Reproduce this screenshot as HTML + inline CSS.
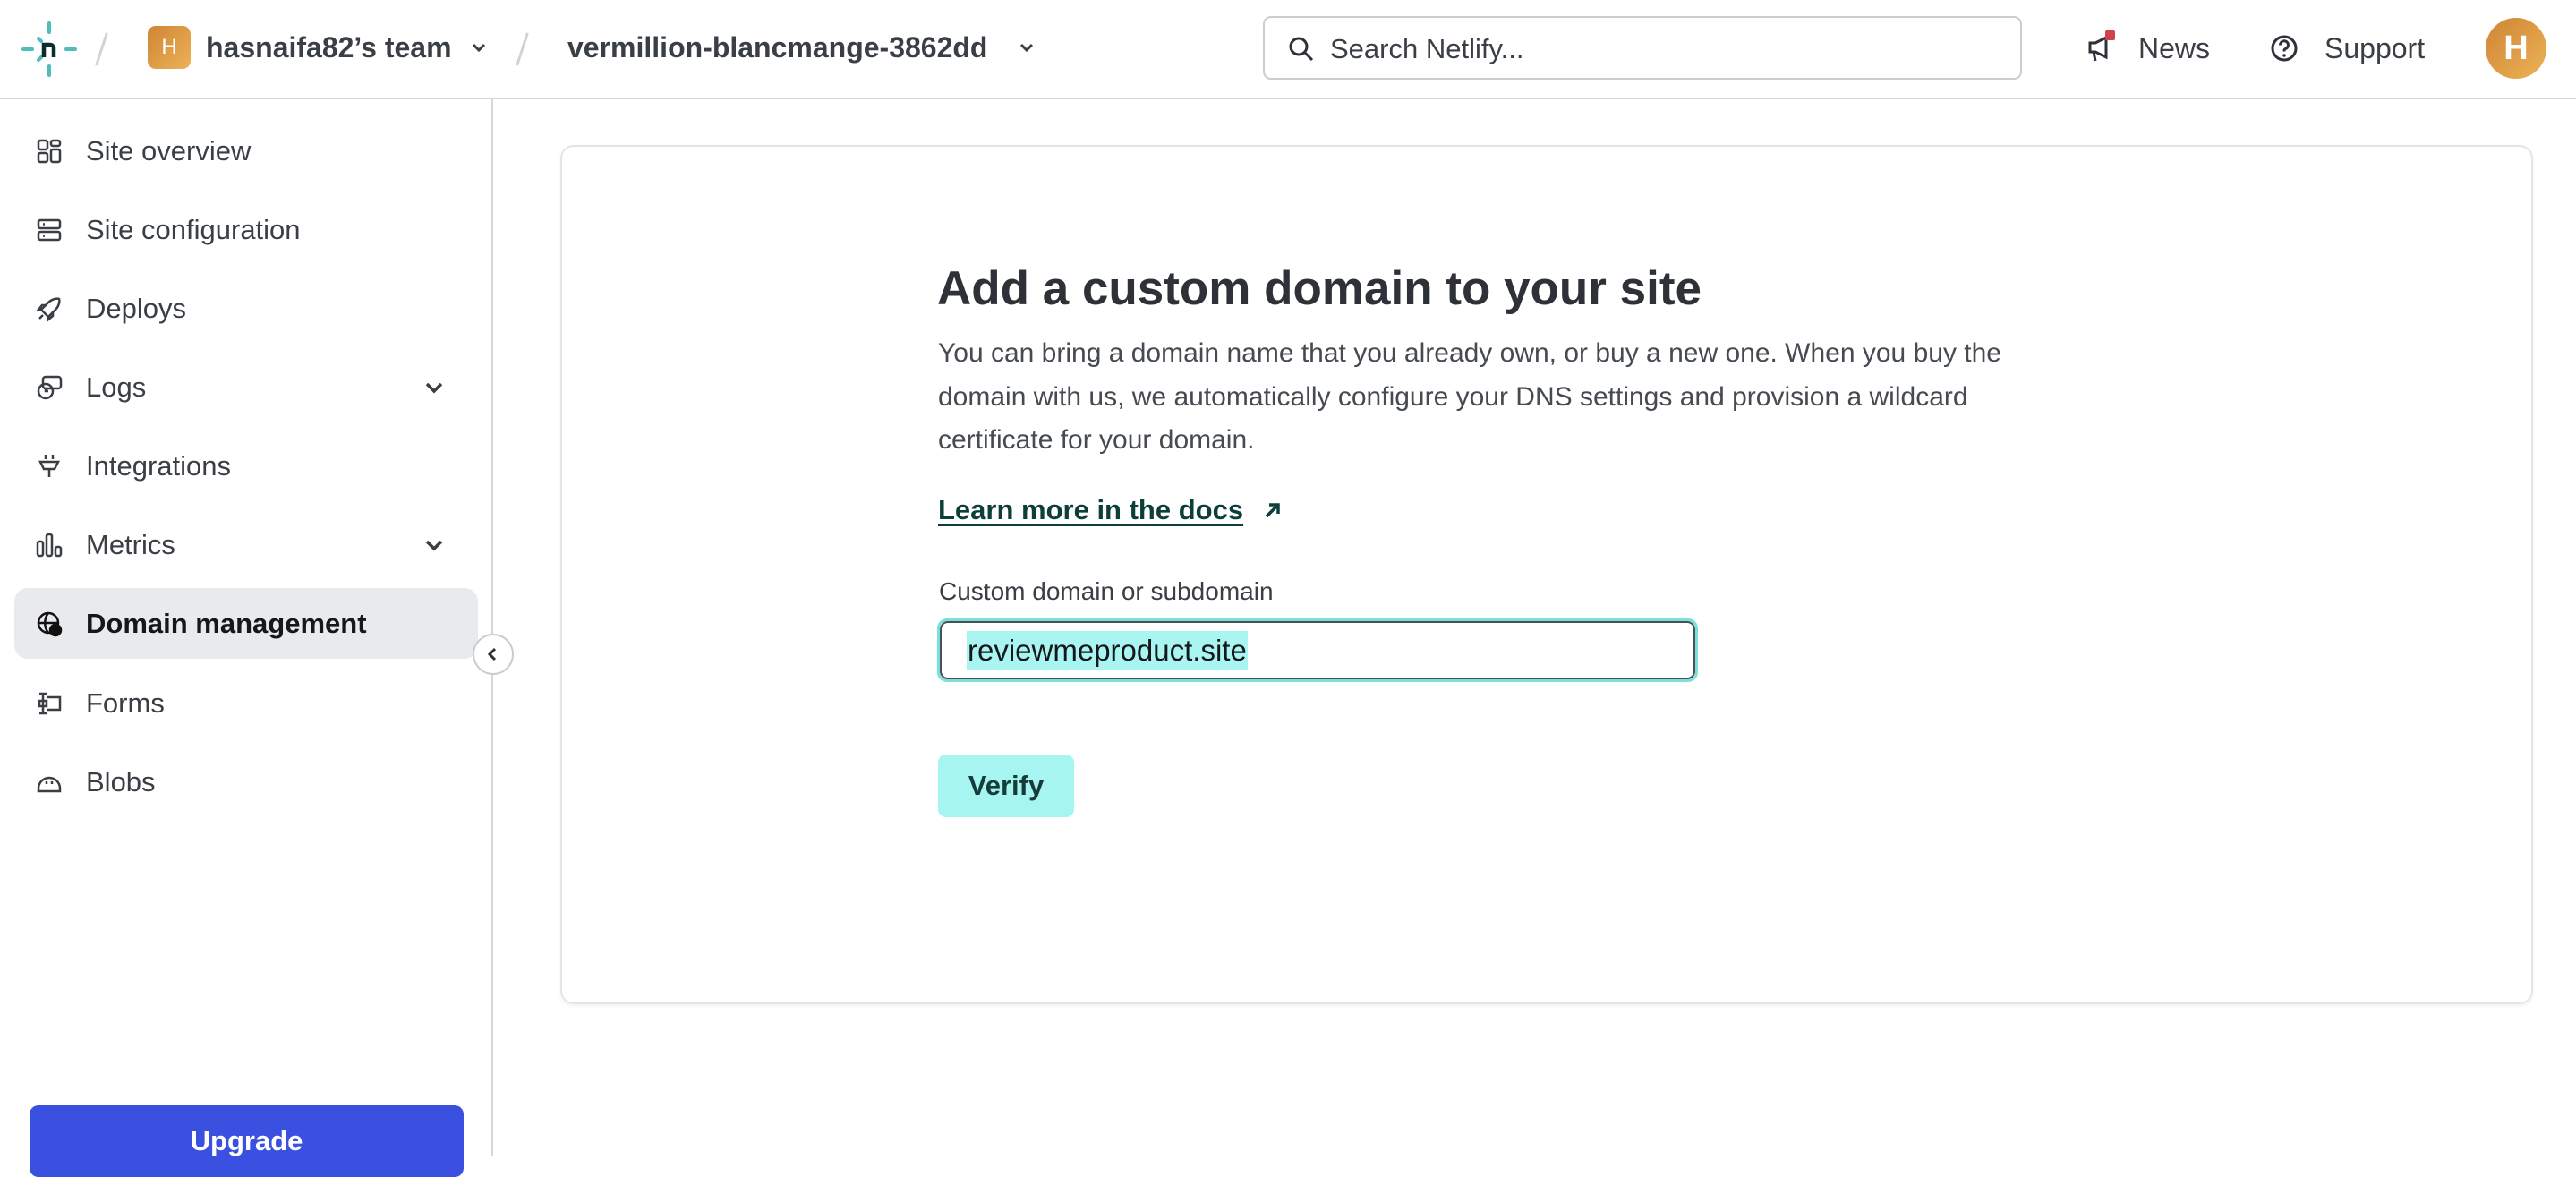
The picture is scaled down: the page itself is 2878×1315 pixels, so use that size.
<!DOCTYPE html>
<html><head><meta charset="utf-8"><style>
*{box-sizing:border-box;margin:0;padding:0}
body{width:2878px;height:1292px;overflow:hidden;background:#fff;font-family:"Liberation Sans",Arial,sans-serif;color:#2e3138;position:relative}
.hdr{position:absolute;left:0;top:0;width:2878px;height:111px;border-bottom:2px solid #d4d7dc;background:#fff}
.abs{position:absolute}
.t{font-size:32px;color:#3a3e45;white-space:nowrap}
.side{position:absolute;left:0;top:111px;width:551px;height:1181px;border-right:2px solid #d4d7dc}
.item{position:absolute;left:0;width:551px;height:80px;display:flex;align-items:center}
.item .ic{position:absolute;left:40px;width:30px;height:30px}
.item .lb{position:absolute;left:96px;font-size:31px;color:#3a3e45}
.item .ch{position:absolute;left:472px;width:26px;height:26px}
.card{position:absolute;left:626px;top:162px;width:2204px;height:960px;border:2px solid #e3e5e8;border-radius:15px;box-shadow:0 2px 4px rgba(0,0,0,.05)}
</style></head><body>
<div class="hdr">
 <svg class="abs" style="left:22px;top:22px" width="66" height="66" viewBox="0 0 66 66">
  <g stroke="#4fbdba" stroke-width="4" stroke-linecap="round"><line x1="33" y1="4" x2="33" y2="14"/><line x1="33" y1="52" x2="33" y2="62"/><line x1="4" y1="33" x2="14" y2="33"/><line x1="52" y1="33" x2="62" y2="33"/><line x1="21" y1="21" x2="24" y2="24"/><line x1="21" y1="45" x2="24" y2="42"/></g>
  <path d="M27 42V28h7a4 4 0 0 1 4 4v10" stroke="#0c2d2e" stroke-width="4.5" fill="none"/>
 </svg>
 <div class="abs" style="left:112px;top:36px;width:3px;height:38px;background:#d0d3d8;transform:rotate(18deg)"></div>
 <div class="abs" style="left:165px;top:29px;width:48px;height:48px;border-radius:9px;background:linear-gradient(135deg,#cf8534,#ecb257);color:#fff;font-size:24px;text-align:center;line-height:48px">H</div>
 <div class="abs t" style="left:230px;top:35px;font-weight:bold;font-size:32px">hasnaifa82’s team</div>
 <svg class="abs" style="left:524px;top:45px" width="22" height="18" viewBox="0 0 22 18"><path d="M5 5l6 6 6-6" stroke="#3a3e45" stroke-width="3" fill="none"/></svg>
 <div class="abs" style="left:582px;top:36px;width:3px;height:38px;background:#d0d3d8;transform:rotate(18deg)"></div>
 <div class="abs t" style="left:634px;top:35px;font-weight:bold;font-size:32px">vermillion-blancmange-3862dd</div>
 <svg class="abs" style="left:1136px;top:45px" width="22" height="18" viewBox="0 0 22 18"><path d="M5 5l6 6 6-6" stroke="#3a3e45" stroke-width="3" fill="none"/></svg>
 <div class="abs" style="left:1411px;top:18px;width:848px;height:71px;border:2px solid #c9ccd1;border-radius:9px"></div>
 <svg class="abs" style="left:1437px;top:38px" width="34" height="34" viewBox="0 0 34 34"><circle cx="14" cy="14" r="9" stroke="#2e3138" stroke-width="3" fill="none"/><line x1="21" y1="21" x2="29" y2="29" stroke="#2e3138" stroke-width="3"/></svg>
 <div class="abs t" style="left:1486px;top:37px;font-size:31px;color:#3a3e45">Search Netlify...</div>
 <svg class="abs" style="left:2330px;top:34px" width="36" height="40" viewBox="0 0 36 40"><path d="M5 14h6l12-6v22l-12-6H5z M9 24l2 10" stroke="#2e3138" stroke-width="3" fill="none"/><rect x="22" y="0" width="11" height="11" rx="2" fill="#d2404a"/></svg>
 <div class="abs t" style="left:2389px;top:36px">News</div>
 <svg class="abs" style="left:2536px;top:38px" width="32" height="32" viewBox="0 0 32 32"><circle cx="16" cy="16" r="13" stroke="#2e3138" stroke-width="3" fill="none"/><path d="M11.5 12.5a4.5 4.5 0 1 1 6 4c-1.5.7-1.5 1.5-1.5 3" stroke="#2e3138" stroke-width="3" fill="none"/><circle cx="16" cy="24" r="1.8" fill="#2e3138"/></svg>
 <div class="abs t" style="left:2597px;top:36px">Support</div>
 <div class="abs" style="left:2777px;top:20px;width:68px;height:68px;border-radius:50%;background:linear-gradient(135deg,#cf8534,#ecb257);color:#fff;font-weight:bold;font-size:38px;text-align:center;line-height:68px">H</div>
</div>

<div class="side">
 <div class="item" style="top:18px"><svg class="ic" viewBox="0 0 30 30" fill="none" stroke="#3a3e45" stroke-width="2.5"><rect x="3" y="3" width="10" height="10" rx="2"/><rect x="17" y="3" width="10" height="6" rx="2"/><rect x="3" y="17" width="10" height="10" rx="2"/><rect x="17" y="13" width="10" height="14" rx="2"/></svg><span class="lb">Site overview</span></div>
 <div class="item" style="top:106px"><svg class="ic" viewBox="0 0 30 30" fill="none" stroke="#3a3e45" stroke-width="2.5"><rect x="3" y="4" width="24" height="9" rx="2"/><rect x="3" y="17" width="24" height="9" rx="2"/><line x1="8" y1="8.5" x2="10" y2="8.5"/><line x1="8" y1="21.5" x2="10" y2="21.5"/></svg><span class="lb">Site configuration</span></div>
 <div class="item" style="top:194px"><svg class="ic" viewBox="0 0 30 30" fill="none" stroke="#3a3e45" stroke-width="2.5"><path d="M10 20l-4-4 8-8c4-4 10-5 12-4 1 2 0 8-4 12l-8 8z M6 16H3l4-5h5 M14 24v3l5-4v-5 M4 26l4-4"/></svg><span class="lb">Deploys</span></div>
 <div class="item" style="top:282px"><svg class="ic" viewBox="0 0 30 30" fill="none" stroke="#3a3e45" stroke-width="2.5"><rect x="8" y="3" width="20" height="13" rx="3"/><circle cx="11" cy="19" r="8"/><path d="M11 15v4h3"/></svg><span class="lb">Logs</span><svg class="ch" viewBox="0 0 26 26"><path d="M5 9l8 8 8-8" stroke="#3a3e45" stroke-width="3.5" fill="none"/></svg></div>
 <div class="item" style="top:370px"><svg class="ic" viewBox="0 0 30 30" fill="none" stroke="#3a3e45" stroke-width="2.5"><line x1="11" y1="2" x2="11" y2="7"/><line x1="19" y1="2" x2="19" y2="7"/><path d="M5 10h20l-4 8h-12z M15 18v9"/></svg><span class="lb">Integrations</span></div>
 <div class="item" style="top:458px"><svg class="ic" viewBox="0 0 30 30" fill="none" stroke="#3a3e45" stroke-width="2.5"><rect x="2" y="11" width="6" height="16" rx="2"/><rect x="12" y="3" width="6" height="24" rx="2"/><rect x="22" y="17" width="6" height="10" rx="2"/></svg><span class="lb">Metrics</span><svg class="ch" viewBox="0 0 26 26"><path d="M5 9l8 8 8-8" stroke="#3a3e45" stroke-width="3.5" fill="none"/></svg></div>
 <div class="abs" style="left:16px;top:546px;width:518px;height:79px;border-radius:15px;background:#e9eaec"></div>
 <div class="item" style="top:546px"><svg class="ic" viewBox="0 0 30 30" fill="none" stroke="#111" stroke-width="2.5"><circle cx="14" cy="14" r="11"/><path d="M3 14h22 M14 3c-5 6-5 16 0 22"/><circle cx="22" cy="22" r="6" fill="#111"/></svg><span class="lb" style="font-weight:bold;color:#15171a">Domain management</span></div>
 <div class="item" style="top:635px"><svg class="ic" viewBox="0 0 30 30" fill="none" stroke="#3a3e45" stroke-width="2.5"><path d="M12 8h15v14H12 M8 4v22 M4 4h8 M4 26h8 M4 12h8v6H4z"/></svg><span class="lb">Forms</span></div>
 <div class="item" style="top:723px"><svg class="ic" viewBox="0 0 30 30" fill="none" stroke="#3a3e45" stroke-width="2.5"><path d="M3 22a12 12 0 0 1 24 0v3H3z"/><line x1="12" y1="14" x2="12" y2="17"/><line x1="18" y1="14" x2="18" y2="17"/></svg><span class="lb">Blobs</span></div>
 <div class="abs" style="left:528px;top:597px;width:46px;height:46px;border-radius:50%;border:2px solid #c9ccd1;background:#fff"></div>
 <svg class="abs" style="left:540px;top:609px" width="22" height="22" viewBox="0 0 22 22"><path d="M13 5l-6 6 6 6" stroke="#2e3138" stroke-width="3" fill="none"/></svg>
 <div class="abs" style="left:33px;top:1124px;width:485px;height:80px;border-radius:10px;background:#3a50e0;color:#fff;font-weight:bold;font-size:31px;text-align:center;line-height:80px">Upgrade</div>
</div>

<div class="card"></div>
<div class="abs" style="left:1047px;top:292px;font-size:53px;font-weight:bold;color:#2e3138;white-space:nowrap">Add a custom domain to your site</div>
<div class="abs" style="left:1048px;top:371px;width:1250px;font-size:30px;line-height:48.5px;color:#464a51">You can bring a domain name that you already own, or buy a new one. When you buy the domain with us, we automatically configure your DNS settings and provision a wildcard certificate for your domain.</div>
<div class="abs" style="left:1048px;top:552px;font-size:31px;font-weight:bold;color:#0e3e3a;text-decoration:underline;text-underline-offset:5px;white-space:nowrap">Learn more in the docs</div>
<svg class="abs" style="left:1408px;top:556px" width="28" height="28" viewBox="0 0 28 28"><path d="M7 21L20 8 M10 8h10v10" stroke="#0e3e3a" stroke-width="3.5" fill="none"/></svg>
<div class="abs" style="left:1049px;top:645px;font-size:28px;color:#3a3e45;white-space:nowrap">Custom domain or subdomain</div>
<div class="abs" style="left:1047px;top:691px;width:850px;height:71px;border-radius:11px;border:3px solid #7ae0dc"></div>
<div class="abs" style="left:1050px;top:694px;width:844px;height:65px;border-radius:9px;border:2.5px solid #4a4e55;background:#fff"></div>
<div class="abs" style="left:1080px;top:705px;height:43px;padding:0 1px;background:#a9f5f2;font-size:33px;line-height:43px;color:#15171a;white-space:nowrap">reviewmeproduct.site</div>
<div class="abs" style="left:1048px;top:843px;width:152px;height:70px;border-radius:9px;background:#a6f5f1;color:#163c3a;font-weight:bold;font-size:31px;text-align:center;line-height:70px">Verify</div>
</body></html>
